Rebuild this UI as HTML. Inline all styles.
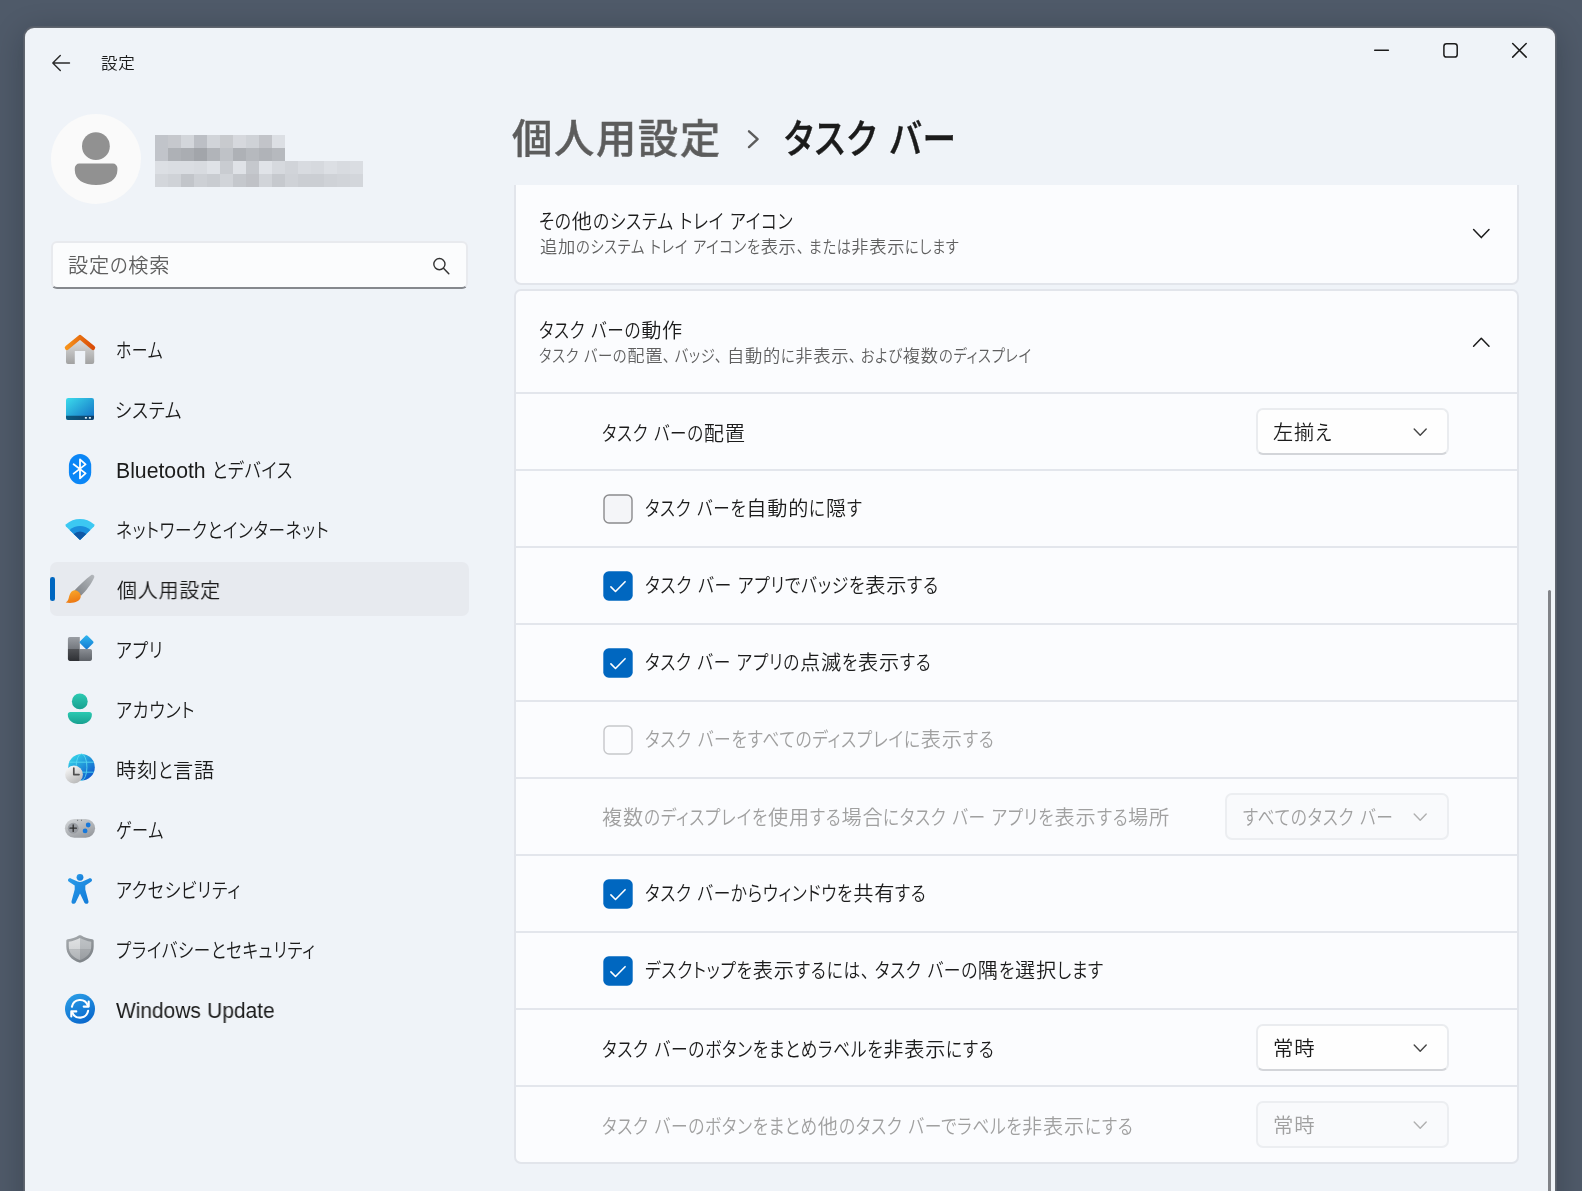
<!DOCTYPE html>
<html lang="ja">
<head>
<meta charset="utf-8">
<title>設定</title>
<style>
*{box-sizing:border-box;margin:0;padding:0}
html,body{width:1582px;height:1191px;overflow:hidden}
body{position:relative;background:#4f5a69;font-family:"Liberation Sans","Noto Sans CJK JP DemiLight","Noto Sans CJK JP",sans-serif;font-feature-settings:"palt";}
#h1a,#h1b{font-family:"Liberation Sans","Noto Sans CJK JP",sans-serif;-webkit-text-stroke:0.4px currentColor}
.win{position:absolute;left:25px;top:28px;width:1530px;height:1300px;background:#eff3f8;border-radius:9px;box-shadow:0 0 0 1px #60666f,0 0 0 2px #565d69,0 6px 30px rgba(10,14,22,.28);}
.t{position:absolute;white-space:pre;display:block;transform-origin:0 50%;will-change:transform}
.r{display:inline-block;transform-origin:0 50%;white-space:pre;word-spacing:.03em}
.c{margin-right:.28em}
.l{font-size:109.1%;letter-spacing:0}
.abs{position:absolute}
.card{position:absolute;left:514px;width:1005px;background:#fbfcfe;border:2px solid #e2e5eb;}
.sep{position:absolute;left:516px;width:1001px;height:2px;background:#e3e6ec}
.combo{position:absolute;height:47px;border-radius:7px;background:#fefefe;border:2px solid #eaecef;border-bottom-color:#d3d5d9;}
.combo.dis{background:#f9fafc;border-color:#eceef1}
svg{position:absolute;overflow:visible}
</style>
</head>
<body>
<div class="win"></div>

<!-- title bar -->
<svg style="left:0;top:0" width="1" height="1"><path d="M60.300 55.600 L52.800 63 L60.300 70.400 M53.200 63 H69.500" fill="none" stroke="#2a2a2a" stroke-width="1.4" stroke-linecap="round" stroke-linejoin="round"/></svg>
<svg style="left:0;top:0" width="1" height="1"><g fill="none" stroke="#1b1b1b" stroke-width="1.5" stroke-linecap="round"><path d="M1374.700 50.300 H1388.400"/><rect x="1443.900" y="43.800" width="13.300" height="13.200" rx="2.600"/><path d="M1512.700 43.500 l13.500 13.600 M1526.200 43.500 l-13.500 13.600"/></g></svg>
<!--SB0--><!-- avatar -->
<div class="abs" style="left:51px;top:114px;width:90px;height:90px;border-radius:50%;background:#fafafa"></div>
<svg style="left:0;top:0" width="1" height="1">
<circle cx="95.9" cy="146.2" r="13.9" fill="#919191"/>
<path d="M79.3 163.6h33.6a4.5 4.5 0 0 1 4.5 4.5v2.2c0 9.3-9 14.8-21.3 14.8s-21.3-5.5-21.3-14.8v-2.2a4.5 4.5 0 0 1 4.5-4.5z" fill="#919191"/>
</svg>
<svg style="left:0;top:0" width="1" height="1" shape-rendering="crispEdges"><rect x="155" y="135" width="13" height="13" fill="#c1c4ca"/><rect x="168" y="135" width="13" height="13" fill="#c6c8cd"/><rect x="181" y="135" width="13" height="13" fill="#d3d6db"/><rect x="194" y="135" width="13" height="13" fill="#bcbfc5"/><rect x="207" y="135" width="13" height="13" fill="#d1d4d9"/><rect x="220" y="135" width="13" height="13" fill="#c8cace"/><rect x="233" y="135" width="13" height="13" fill="#d6d8dd"/><rect x="246" y="135" width="13" height="13" fill="#cfd2d7"/><rect x="259" y="135" width="13" height="13" fill="#c2c4c9"/><rect x="272" y="135" width="13" height="13" fill="#dcdfe4"/><rect x="155" y="148" width="13" height="13" fill="#c1c4ca"/><rect x="168" y="148" width="13" height="13" fill="#aeb1b6"/><rect x="181" y="148" width="13" height="13" fill="#aaadb2"/><rect x="194" y="148" width="13" height="13" fill="#a2a5aa"/><rect x="207" y="148" width="13" height="13" fill="#b1b4b9"/><rect x="220" y="148" width="13" height="13" fill="#bfc2c7"/><rect x="233" y="148" width="13" height="13" fill="#aeb1b6"/><rect x="246" y="148" width="13" height="13" fill="#b6b9be"/><rect x="259" y="148" width="13" height="13" fill="#b0b3b8"/><rect x="272" y="148" width="13" height="13" fill="#b6b9be"/><rect x="155" y="161" width="13" height="13" fill="#dcdfe4"/><rect x="168" y="161" width="13" height="13" fill="#dadde2"/><rect x="181" y="161" width="13" height="13" fill="#dadde2"/><rect x="194" y="161" width="13" height="13" fill="#d8dbe0"/><rect x="207" y="161" width="13" height="13" fill="#dfe2e7"/><rect x="220" y="161" width="13" height="13" fill="#c9ccd1"/><rect x="233" y="161" width="13" height="13" fill="#dfe2e7"/><rect x="246" y="161" width="13" height="13" fill="#c5c8cd"/><rect x="259" y="161" width="13" height="13" fill="#e0e3e8"/><rect x="272" y="161" width="13" height="13" fill="#d6d9de"/><rect x="285" y="161" width="13" height="13" fill="#d1d4d9"/><rect x="298" y="161" width="13" height="13" fill="#d8dbe0"/><rect x="311" y="161" width="13" height="13" fill="#d6d9de"/><rect x="324" y="161" width="13" height="13" fill="#dcdfe4"/><rect x="337" y="161" width="13" height="13" fill="#d8dbe0"/><rect x="350" y="161" width="13" height="13" fill="#dadde2"/><rect x="155" y="174" width="13" height="13" fill="#d3d6db"/><rect x="168" y="174" width="13" height="13" fill="#cfd2d7"/><rect x="181" y="174" width="13" height="13" fill="#c2c5ca"/><rect x="194" y="174" width="13" height="13" fill="#cdd0d5"/><rect x="207" y="174" width="13" height="13" fill="#c9ccd1"/><rect x="220" y="174" width="13" height="13" fill="#d1d4d9"/><rect x="233" y="174" width="13" height="13" fill="#c5c8cd"/><rect x="246" y="174" width="13" height="13" fill="#c0c2c7"/><rect x="259" y="174" width="13" height="13" fill="#d1d4d9"/><rect x="272" y="174" width="13" height="13" fill="#c6c9ce"/><rect x="285" y="174" width="13" height="13" fill="#cfd2d7"/><rect x="298" y="174" width="13" height="13" fill="#cbced3"/><rect x="311" y="174" width="13" height="13" fill="#cbced3"/><rect x="324" y="174" width="13" height="13" fill="#cfd2d7"/><rect x="337" y="174" width="13" height="13" fill="#d1d4d9"/><rect x="350" y="174" width="13" height="13" fill="#d3d6db"/></svg>
<!-- search -->
<div class="abs" style="left:51px;top:240.5px;width:417px;height:48px;border-radius:6px;background:#fbfcfd;border:2px solid #e8eaee;border-bottom:2px solid #85888d;"></div>
<svg style="left:0;top:0" width="1" height="1"><circle cx="439.400" cy="264.100" r="5.600" fill="none" stroke="#333" stroke-width="1.400"/><path d="M443.500 268.200 l5.300 5.500" stroke="#333" stroke-width="1.500" stroke-linecap="round"/></svg>
<!-- selected nav -->
<div class="abs" style="left:50px;top:562px;width:419px;height:54px;border-radius:7px;background:#e7eaef"></div>
<div class="abs" style="left:50px;top:576.8px;width:4.6px;height:24.4px;border-radius:2.3px;background:#0067c0"></div>
<!-- icons -->
<svg style="left:0;top:0" width="1" height="1">
<defs>
<linearGradient id="gHomeB" x1="0" y1="0" x2="0" y2="1"><stop offset="0" stop-color="#e2e2e2"/><stop offset="1" stop-color="#a2a2a2"/></linearGradient>
<linearGradient id="gHomeR" x1="0" y1="0" x2="1" y2="0"><stop offset="0" stop-color="#f6921a"/><stop offset="1" stop-color="#d94c08"/></linearGradient>
<linearGradient id="gSys" x1="0" y1="0" x2="1" y2="1"><stop offset="0" stop-color="#3cdcec"/><stop offset="1" stop-color="#116cc4"/></linearGradient>
<linearGradient id="gSysB" x1="0" y1="0" x2="1" y2="0"><stop offset="0" stop-color="#0c5c82"/><stop offset="1" stop-color="#103e68"/></linearGradient>
<linearGradient id="gBrH" x1="1" y1="0" x2="0" y2="1"><stop offset="0" stop-color="#b6babe"/><stop offset="1" stop-color="#7c8085"/></linearGradient>
<linearGradient id="gBrB" x1="0.3" y1="0" x2="0.6" y2="1"><stop offset="0" stop-color="#f9a82c"/><stop offset="1" stop-color="#ec7612"/></linearGradient>
<linearGradient id="gApA" x1="0" y1="0" x2="0" y2="1"><stop offset="0" stop-color="#9a9ea4"/><stop offset="1" stop-color="#74787e"/></linearGradient>
<linearGradient id="gApB" x1="0" y1="0" x2="0" y2="1"><stop offset="0" stop-color="#505256"/><stop offset="1" stop-color="#2e3034"/></linearGradient>
<linearGradient id="gApC" x1="0" y1="0" x2="0" y2="1"><stop offset="0" stop-color="#8a8e94"/><stop offset="1" stop-color="#5e6268"/></linearGradient>
<linearGradient id="gApD" x1="0" y1="0" x2="1" y2="1"><stop offset="0" stop-color="#30b8f0"/><stop offset="1" stop-color="#1478d0"/></linearGradient>
<linearGradient id="gAcc" x1="0" y1="0" x2="0" y2="1"><stop offset="0" stop-color="#2ccab2"/><stop offset="1" stop-color="#18a090"/></linearGradient>
<linearGradient id="gGlobe" x1="0.15" y1="0.1" x2="0.85" y2="0.9"><stop offset="0" stop-color="#34d0e8"/><stop offset="1" stop-color="#0e58cc"/></linearGradient>
<linearGradient id="gClock" x1="0.2" y1="0" x2="0.8" y2="1"><stop offset="0" stop-color="#fafafa"/><stop offset="1" stop-color="#b4b4b4"/></linearGradient>
<linearGradient id="gGame" x1="0.2" y1="0" x2="0.8" y2="1"><stop offset="0" stop-color="#d0d3d6"/><stop offset="1" stop-color="#94979c"/></linearGradient>
<linearGradient id="gA11y" x1="0" y1="0" x2="1" y2="1"><stop offset="0" stop-color="#2c9ce8"/><stop offset="1" stop-color="#0f78d8"/></linearGradient>
<linearGradient id="gSh" x1="0" y1="0" x2="0.6" y2="1"><stop offset="0" stop-color="#a8acb0"/><stop offset="1" stop-color="#7e8388"/></linearGradient>
<linearGradient id="gShO" x1="0" y1="0" x2="0" y2="1"><stop offset="0" stop-color="#fff" stop-opacity=".12"/><stop offset="1" stop-color="#50555a" stop-opacity=".22"/></linearGradient>
<linearGradient id="gUpd" x1="0.2" y1="0" x2="0.7" y2="1"><stop offset="0" stop-color="#2c9ee6"/><stop offset="1" stop-color="#0866cc"/></linearGradient>
</defs>
<!-- home -->
<path d="M80 338.2 L94.2 350.5 V362 a2 2 0 0 1 -2 2 H85.2 V351 H74.8 V364 H68 a2 2 0 0 1 -2 -2 V350.5 Z" fill="url(#gHomeB)"/>
<path d="M67 347.800 L80 337.100 L93 347.800" fill="none" stroke="url(#gHomeR)" stroke-width="4.4" stroke-linecap="round" stroke-linejoin="round"/>
<!-- system -->
<rect x="66" y="398" width="28" height="22" rx="2.2" fill="url(#gSys)"/>
<path d="M66 415.7h28v2.1a2.2 2.2 0 0 1-2.2 2.2H68.2a2.2 2.2 0 0 1-2.2-2.2z" fill="url(#gSysB)"/>
<rect x="84.9" y="417" width="2" height="1.7" fill="#d6eaf4"/><rect x="88.9" y="417" width="2" height="1.7" fill="#d6eaf4"/>
<!-- bluetooth -->
<rect x="68.9" y="453.9" width="22.3" height="30.3" rx="11.15" ry="12" fill="#0b86f6"/>
<path d="M73.6 464.2 L85.6 473.4 L80 478.4 V459.4 L85.6 464.4 L73.6 473.6" fill="none" stroke="#fff" stroke-width="1.8" stroke-linecap="round" stroke-linejoin="round"/>
<!-- network -->
<path d="M80 540.1 L66 526.6 a1.6 1.6 0 0 1 .1 -2.3 A21 21 0 0 1 93.9 524.3 a1.6 1.6 0 0 1 .1 2.3 Z" fill="#3cc8f2"/>
<path d="M80 540.1 L69.6 530 A15.2 15.2 0 0 1 90.4 530 Z" fill="#1a8edc"/>
<path d="M80 540.1 L73.7 534 A9 9 0 0 1 86.3 534 Z" fill="#0f58a6"/>
<!-- brush -->
<path d="M91.300 575 C92.600 574 94.800 575.200 94.300 577.200 C91.500 583.800 86.200 590.600 81 595.800 L74.400 590.600 C79.400 585 85.400 579.500 91.300 575 Z" fill="url(#gBrH)"/>
<path d="M74.800 590.300 C78.600 590.800 81.200 593.600 80.700 597 C80 601.600 74 603.700 65.700 602.600 C68.400 601.200 68.500 598.600 69.200 596 C70.200 592.500 72.400 590.100 74.800 590.300 Z" fill="url(#gBrB)"/>
<!-- apps -->
<path d="M69.7 637 H79.8 V649 H67.9 V638.8 a1.8 1.8 0 0 1 1.8 -1.8z" fill="url(#gApA)"/>
<path d="M67.9 649 H79.8 V660.9 H69.7 a1.8 1.8 0 0 1 -1.8 -1.8z" fill="url(#gApB)"/>
<path d="M79.8 649 H90.2 a1.8 1.8 0 0 1 1.8 1.8 V659.1 a1.8 1.8 0 0 1 -1.8 1.8 H79.8z" fill="url(#gApC)"/>
<rect x="81.3" y="636.9" width="10.6" height="10.6" rx="1.4" transform="rotate(45 86.6 642.2)" fill="url(#gApD)"/>
<!-- accounts -->
<circle cx="79.8" cy="701.4" r="7.9" fill="url(#gAcc)"/>
<path d="M70.4 711.9h18.9a2.6 2.6 0 0 1 2.6 2.6c0 6-5.2 9.6-12 9.6s-12.1-3.6-12.1-9.6a2.6 2.6 0 0 1 2.6-2.6z" fill="url(#gAcc)"/>
<!-- time -->
<circle cx="81.5" cy="767.2" r="13.3" fill="url(#gGlobe)"/>
<g fill="none" stroke="#5ce0f2" stroke-width="1" opacity=".8"><ellipse cx="81.5" cy="767.2" rx="5.4" ry="13.3"/><path d="M69.2 762.2h24.6M69.2 772.2h24.6"/></g>
<circle cx="74" cy="774.5" r="8.9" fill="url(#gClock)"/>
<path d="M73.8 768v6.6h5.2" fill="none" stroke="#505050" stroke-width="1.7" stroke-linecap="round" stroke-linejoin="round"/>
<!-- game -->
<rect x="64.9" y="818.9" width="30.2" height="18.8" rx="9.4" fill="url(#gGame)"/>
<circle cx="73.2" cy="828.2" r="5.4" fill="#8e9298" opacity=".75"/>
<path d="M70 828.2h6.4M73.2 825v6.4" stroke="#2e2e2e" stroke-width="1.3" stroke-linecap="round"/>
<circle cx="88.2" cy="825" r="2.4" fill="#1878da"/><circle cx="85.1" cy="830.9" r="2.4" fill="#1878da"/>
<path d="M77.2 820.3h.9M81 820.3h.9" stroke="#55585c" stroke-width=".9"/>
<!-- accessibility -->
<circle cx="80" cy="877.3" r="3.4" fill="url(#gA11y)"/>
<path d="M68.900 878.600 c.9 -.5 1.600 -.3 2.500 .1 L77.600 881.500 c1.500 .6 3.300 .6 4.800 0 L88.600 878.700 c.9 -.4 1.700 -.6 2.500 -.1 c1.300 .8 1.200 2.500 0 3.100 L85.300 885.600 V889.600 L88.400 900.900 c.4 1.300 -.2 2.400 -1.300 2.800 c-1.200 .4 -2.500 -.2 -2.900 -1.400 L80 893.400 L75.800 902.300 c-.4 1.200 -1.700 1.800 -2.900 1.400 c-1.100 -.4 -1.700 -1.500 -1.300 -2.800 L74.700 889.600 V885.600 L68.900 881.700 c-1.200 -.6 -1.300 -2.300 0 -3.100 Z" fill="url(#gA11y)"/>
<!-- privacy -->
<path d="M80 935.2 c.5 0 .9 .1 1.300 .4 C84.700 937.700 88.500 938.900 92.300 939.300 c.8 .1 1.400 .7 1.400 1.500 V946.500 c0 8 -5 13.300 -13 16.100 c-.5 .2 -.9 .2 -1.400 0 c-8 -2.800 -13 -8.100 -13 -16.100 V940.800 c0 -.8 .6 -1.400 1.400 -1.500 C71.500 938.900 75.300 937.700 78.700 935.600 c.4 -.3 .8 -.4 1.300 -.4 Z" fill="url(#gSh)"/>
<clipPath id="cSh"><path d="M80 938 C83.300 939.900 87.200 941.200 91.200 941.700 V946.500 c0 6.500 -4.200 11 -11.200 13.500 c-7 -2.500 -11.200 -7 -11.200 -13.500 V941.700 C72.800 941.200 76.700 939.900 80 938 Z"/></clipPath>
<g clip-path="url(#cSh)"><rect x="66" y="936" width="14" height="13.500" fill="#dcdee0"/><rect x="80" y="936" width="14" height="13.500" fill="#b6babe"/><rect x="66" y="949.500" width="14" height="13" fill="#c2c5c8"/><rect x="80" y="949.500" width="14" height="13" fill="#a6aaae"/><rect x="66" y="936" width="28" height="27" fill="url(#gShO)"/></g>
<!-- update -->
<circle cx="80" cy="1008.8" r="15" fill="url(#gUpd)"/>
<g fill="none" stroke="#fff" stroke-width="2.1" stroke-linecap="round" stroke-linejoin="round">
<path d="M71.900 1006.700 A8.300 8.300 0 0 1 87.800 1005.300"/><path d="M83.700 1006.600 H88.700 V1001.600"/>
<path d="M88.100 1010.900 A8.300 8.300 0 0 1 72.200 1012.300"/><path d="M76.300 1011.400 H71.300 V1016.400"/>
</g>
</svg>
<!--SB1-->
<div class="card" style="top:170px;height:115px;border-radius:0 0 7px 7px;clip-path:inset(15px 0 0 0)"></div>
<div class="card" style="top:289px;height:875px;border-radius:7px"></div>
<div class="sep" style="top:392px"></div>
<div class="sep" style="top:469px"></div>
<div class="sep" style="top:546px"></div>
<div class="sep" style="top:623px"></div>
<div class="sep" style="top:700px"></div>
<div class="sep" style="top:777px"></div>
<div class="sep" style="top:854px"></div>
<div class="sep" style="top:931px"></div>
<div class="sep" style="top:1008px"></div>
<div class="sep" style="top:1085px"></div>
<svg style="left:0;top:0" width="1" height="1"><path d="M1473.60 229.60 L1481.30 237.60 L1489.00 229.60" fill="none" stroke="#1b1b1b" stroke-width="1.50" stroke-linecap="round" stroke-linejoin="round"/></svg>
<svg style="left:0;top:0" width="1" height="1"><path d="M1473.60 346.20 L1481.30 338.20 L1489.00 346.20" fill="none" stroke="#1b1b1b" stroke-width="1.50" stroke-linecap="round" stroke-linejoin="round"/></svg>
<svg style="left:0;top:0" width="1" height="1"><rect x="604.00" y="495.00" width="28.00" height="28.00" rx="5" fill="#f4f5f8" stroke="#8b8b8d" stroke-width="1.4"/></svg>
<svg style="left:0;top:0" width="1" height="1"><rect x="603.30" y="571.30" width="29.40" height="29.40" rx="5.5" fill="#0067c0"/><path d="M610.90 586.90 l4.6 4.6 l9.6 -9.8" fill="none" stroke="#fff" stroke-width="1.6" stroke-linecap="round" stroke-linejoin="round"/></svg>
<svg style="left:0;top:0" width="1" height="1"><rect x="603.30" y="648.30" width="29.40" height="29.40" rx="5.5" fill="#0067c0"/><path d="M610.90 663.90 l4.6 4.6 l9.6 -9.8" fill="none" stroke="#fff" stroke-width="1.6" stroke-linecap="round" stroke-linejoin="round"/></svg>
<svg style="left:0;top:0" width="1" height="1"><rect x="604.00" y="726.00" width="28.00" height="28.00" rx="5" fill="#fbfcfe" stroke="#c6c7ca" stroke-width="1.4"/></svg>
<svg style="left:0;top:0" width="1" height="1"><rect x="603.30" y="879.30" width="29.40" height="29.40" rx="5.5" fill="#0067c0"/><path d="M610.90 894.90 l4.6 4.6 l9.6 -9.8" fill="none" stroke="#fff" stroke-width="1.6" stroke-linecap="round" stroke-linejoin="round"/></svg>
<svg style="left:0;top:0" width="1" height="1"><rect x="603.30" y="956.30" width="29.40" height="29.40" rx="5.5" fill="#0067c0"/><path d="M610.90 971.90 l4.6 4.6 l9.6 -9.8" fill="none" stroke="#fff" stroke-width="1.6" stroke-linecap="round" stroke-linejoin="round"/></svg>
<div class="combo" style="left:1256.0px;top:408px;width:193px"></div><svg style="left:0;top:0" width="1" height="1"><path d="M1414.20 428.90 L1420.20 435.30 L1426.20 428.90" fill="none" stroke="#454545" stroke-width="1.40" stroke-linecap="round" stroke-linejoin="round"/></svg>
<div class="combo dis" style="left:1225.0px;top:793px;width:224px"></div><svg style="left:0;top:0" width="1" height="1"><path d="M1414.20 813.90 L1420.20 820.30 L1426.20 813.90" fill="none" stroke="#b0b0b0" stroke-width="1.40" stroke-linecap="round" stroke-linejoin="round"/></svg>
<div class="combo" style="left:1256.0px;top:1024px;width:193px"></div><svg style="left:0;top:0" width="1" height="1"><path d="M1414.20 1044.90 L1420.20 1051.30 L1426.20 1044.90" fill="none" stroke="#454545" stroke-width="1.40" stroke-linecap="round" stroke-linejoin="round"/></svg>
<div class="combo dis" style="left:1256.0px;top:1101px;width:193px"></div><svg style="left:0;top:0" width="1" height="1"><path d="M1414.20 1121.90 L1420.20 1128.30 L1426.20 1121.90" fill="none" stroke="#b0b0b0" stroke-width="1.40" stroke-linecap="round" stroke-linejoin="round"/></svg>
<div class="abs" style="left:1547.5px;top:590px;width:3px;height:700px;border-radius:2px;background:#818388"></div>
<svg style="left:0;top:0" width="1" height="1"><path d="M749 131.300 L757.600 139.200 L749 147.100" fill="none" stroke="#5c5c5c" stroke-width="2.4" stroke-linecap="round" stroke-linejoin="round"/></svg>
<span class="t" id="ttl" style="left:101.20px;top:50.00px;font-size:16.32px;letter-spacing:0.68px;line-height:26px;color:#1b1b1b;font-weight:400;transform:scaleX(1.0156)"><span class="r">設定</span></span>
<span class="t" id="srch" style="left:67.60px;top:250.10px;font-size:20.16px;letter-spacing:0.84px;line-height:32px;color:#5f5f5f;font-weight:400;transform:scaleX(1.0000)"><span class="r">設定</span><span class="r" style="transform:scaleX(0.9012);margin-right:-2.00px">の</span><span class="r">検索</span></span>
<span class="t" id="nav0" style="left:115.60px;top:334.70px;font-size:20.16px;letter-spacing:0.84px;line-height:32px;color:#1b1b1b;font-weight:400;transform:scaleX(1.0000)"><span class="r" style="transform:scaleX(0.7837);margin-right:-13.02px">ホーム</span></span>
<span class="t" id="nav1" style="left:114.60px;top:394.90px;font-size:20.16px;letter-spacing:0.84px;line-height:32px;color:#1b1b1b;font-weight:400;transform:scaleX(1.0000)"><span class="r" style="transform:scaleX(0.8757);margin-right:-9.53px">システム</span></span>
<span class="t" id="nav2" style="left:115.60px;top:455.30px;font-size:20.16px;letter-spacing:0.84px;line-height:32px;color:#1b1b1b;font-weight:400;transform:scaleX(1.0000)"><span class="r l" style="transform:scaleX(0.965);margin-right:-3.49px">Bluetooth </span><span class="r" style="transform:scaleX(0.8501);margin-right:-14.26px">とデバイス</span></span>
<span class="t" id="nav3" style="left:115.60px;top:514.70px;font-size:20.16px;letter-spacing:0.84px;line-height:32px;color:#1b1b1b;font-weight:400;transform:scaleX(1.0000)"><span class="r" style="transform:scaleX(0.8206);margin-right:-46.64px">ネットワークとインターネット</span></span>
<span class="t" id="nav4" style="left:116.60px;top:574.70px;font-size:20.16px;letter-spacing:0.84px;line-height:32px;color:#1b1b1b;font-weight:400;transform:scaleX(0.9904)"><span class="r">個人用設定</span></span>
<span class="t" id="nav5" style="left:115.60px;top:634.70px;font-size:20.16px;letter-spacing:0.84px;line-height:32px;color:#1b1b1b;font-weight:400;transform:scaleX(1.0000)"><span class="r" style="transform:scaleX(0.8395);margin-right:-9.04px">アプリ</span></span>
<span class="t" id="nav6" style="left:115.60px;top:694.70px;font-size:20.16px;letter-spacing:0.84px;line-height:32px;color:#1b1b1b;font-weight:400;transform:scaleX(1.0000)"><span class="r" style="transform:scaleX(0.8491);margin-right:-14.07px">アカウント</span></span>
<span class="t" id="nav7" style="left:115.60px;top:754.70px;font-size:20.16px;letter-spacing:0.84px;line-height:32px;color:#1b1b1b;font-weight:400;transform:scaleX(1.0000)"><span class="r">時刻</span><span class="r" style="transform:scaleX(0.8110);margin-right:-3.52px">と</span><span class="r">言語</span></span>
<span class="t" id="nav8" style="left:115.60px;top:814.70px;font-size:20.16px;letter-spacing:0.84px;line-height:32px;color:#1b1b1b;font-weight:400;transform:scaleX(1.0000)"><span class="r" style="transform:scaleX(0.7970);margin-right:-12.22px">ゲーム</span></span>
<span class="t" id="nav9" style="left:115.60px;top:875.40px;font-size:20.16px;letter-spacing:0.84px;line-height:32px;color:#1b1b1b;font-weight:400;transform:scaleX(1.0000)"><span class="r" style="transform:scaleX(0.8438);margin-right:-23.12px">アクセシビリティ</span></span>
<span class="t" id="nav10" style="left:115.60px;top:935.40px;font-size:20.16px;letter-spacing:0.84px;line-height:32px;color:#1b1b1b;font-weight:400;transform:scaleX(1.0000)"><span class="r" style="transform:scaleX(0.8187);margin-right:-44.21px">プライバシーとセキュリティ</span></span>
<span class="t" id="nav11" style="left:116.00px;top:994.70px;font-size:20.16px;letter-spacing:0.84px;line-height:32px;color:#1b1b1b;font-weight:400;transform:scaleX(0.9851)"><span class="r l" style="transform:scaleX(0.965);margin-right:-5.84px">Windows Update</span></span>
<span class="t" id="h1a" style="left:512.20px;top:107.70px;font-size:40.32px;letter-spacing:1.68px;line-height:63px;color:#5c5c5c;font-weight:500;transform:scaleX(0.9991)"><span class="r">個人用設定</span></span>
<span class="t" id="h1b" style="left:784.20px;top:107.50px;font-size:40.32px;letter-spacing:1.68px;line-height:63px;color:#1b1b1b;font-weight:500;transform:scaleX(1.0000)"><span class="r" style="transform:scaleX(0.8334);margin-right:-34.65px">タスク バー</span></span>
<span class="t" id="c1t" style="left:538.80px;top:205.70px;font-size:20.16px;letter-spacing:0.84px;line-height:32px;color:#1b1b1b;font-weight:400;transform:scaleX(1.0000)"><span class="r" style="transform:scaleX(0.8324);margin-right:-6.59px">その</span><span class="r">他</span><span class="r" style="transform:scaleX(0.8324);margin-right:-40.33px">のシステム トレイ アイコン</span></span>
<span class="t" id="c1d" style="left:540.10px;top:234.40px;font-size:17.28px;letter-spacing:0.72px;line-height:27px;color:#5f5f5f;font-weight:400;transform:scaleX(1.0000)"><span class="r">追加</span><span class="r" style="transform:scaleX(0.8290);margin-right:-38.08px">のシステム トレイ アイコンを</span><span class="r">表示</span><span class="r" style="transform:scaleX(0.8290);margin-right:-11.29px"><span class="c">、</span>または</span><span class="r">非表示</span><span class="r" style="transform:scaleX(0.8290);margin-right:-11.22px">にします</span></span>
<span class="t" id="c2t" style="left:538.80px;top:315.10px;font-size:20.16px;letter-spacing:0.84px;line-height:32px;color:#1b1b1b;font-weight:400;transform:scaleX(1.0000)"><span class="r" style="transform:scaleX(0.8217);margin-right:-22.15px">タスク バーの</span><span class="r">動作</span></span>
<span class="t" id="c2d" style="left:538.80px;top:342.90px;font-size:17.28px;letter-spacing:0.72px;line-height:27px;color:#5f5f5f;font-weight:400;transform:scaleX(1.0000)"><span class="r" style="transform:scaleX(0.8289);margin-right:-18.21px">タスク バーの</span><span class="r">配置</span><span class="r" style="transform:scaleX(0.8289);margin-right:-13.14px"><span class="c">、</span>バッジ<span class="c">、</span></span><span class="r">自動的</span><span class="r" style="transform:scaleX(0.8289);margin-right:-2.97px">に</span><span class="r">非表示</span><span class="r" style="transform:scaleX(0.8289);margin-right:-11.06px"><span class="c">、</span>および</span><span class="r">複数</span><span class="r" style="transform:scaleX(0.8289);margin-right:-19.13px">のディスプレイ</span></span>
<span class="t" id="r1" style="left:602.20px;top:417.90px;font-size:20.16px;letter-spacing:0.84px;line-height:32px;color:#1b1b1b;font-weight:400;transform:scaleX(1.0000)"><span class="r" style="transform:scaleX(0.8192);margin-right:-22.46px">タスク バーの</span><span class="r">配置</span></span>
<span class="t" id="r2" style="left:645.30px;top:493.20px;font-size:20.16px;letter-spacing:0.84px;line-height:32px;color:#1b1b1b;font-weight:400;transform:scaleX(1.0000)"><span class="r" style="transform:scaleX(0.8207);margin-right:-22.13px">タスク バーを</span><span class="r">自動的</span><span class="r" style="transform:scaleX(0.8207);margin-right:-3.63px">に</span><span class="r">隠</span><span class="r" style="transform:scaleX(0.8207);margin-right:-3.42px">す</span></span>
<span class="t" id="r3" style="left:645.30px;top:570.20px;font-size:20.16px;letter-spacing:0.84px;line-height:32px;color:#1b1b1b;font-weight:400;transform:scaleX(1.0000)"><span class="r" style="transform:scaleX(0.8357);margin-right:-43.29px">タスク バー アプリでバッジを</span><span class="r">表示</span><span class="r" style="transform:scaleX(0.8357);margin-right:-6.24px">する</span></span>
<span class="t" id="r4" style="left:645.30px;top:647.20px;font-size:20.16px;letter-spacing:0.84px;line-height:32px;color:#1b1b1b;font-weight:400;transform:scaleX(1.0000)"><span class="r" style="transform:scaleX(0.8258);margin-right:-32.69px">タスク バー アプリの</span><span class="r">点滅</span><span class="r" style="transform:scaleX(0.8258);margin-right:-3.39px">を</span><span class="r">表示</span><span class="r" style="transform:scaleX(0.8258);margin-right:-6.62px">する</span></span>
<span class="t" id="r5" style="left:645.30px;top:724.20px;font-size:20.16px;letter-spacing:0.84px;line-height:32px;color:#a0a0a0;font-weight:400;transform:scaleX(1.0000)"><span class="r" style="transform:scaleX(0.8307);margin-right:-56.19px">タスク バーをすべてのディスプレイに</span><span class="r">表示</span><span class="r" style="transform:scaleX(0.8307);margin-right:-6.43px">する</span></span>
<span class="t" id="r6" style="left:602.20px;top:801.50px;font-size:20.16px;letter-spacing:0.84px;line-height:32px;color:#a0a0a0;font-weight:400;transform:scaleX(1.0000)"><span class="r">複数</span><span class="r" style="transform:scaleX(0.8268);margin-right:-25.97px">のディスプレイを</span><span class="r">使用</span><span class="r" style="transform:scaleX(0.8268);margin-right:-6.58px">する</span><span class="r">場合</span><span class="r" style="transform:scaleX(0.8268);margin-right:-35.86px">にタスク バー アプリを</span><span class="r">表示</span><span class="r" style="transform:scaleX(0.8268);margin-right:-6.58px">する</span><span class="r">場所</span></span>
<span class="t" id="r7" style="left:645.30px;top:878.20px;font-size:20.16px;letter-spacing:0.84px;line-height:32px;color:#1b1b1b;font-weight:400;transform:scaleX(1.0000)"><span class="r" style="transform:scaleX(0.8258);margin-right:-43.90px">タスク バーからウィンドウを</span><span class="r">共有</span><span class="r" style="transform:scaleX(0.8258);margin-right:-6.62px">する</span></span>
<span class="t" id="r8" style="left:645.30px;top:955.20px;font-size:20.16px;letter-spacing:0.84px;line-height:32px;color:#1b1b1b;font-weight:400;transform:scaleX(1.0000)"><span class="r" style="transform:scaleX(0.8318);margin-right:-21.78px">デスクトップを</span><span class="r">表示</span><span class="r" style="transform:scaleX(0.8318);margin-right:-37.01px">するには<span class="c">、</span>タスク バーの</span><span class="r">隅</span><span class="r" style="transform:scaleX(0.8318);margin-right:-3.27px">を</span><span class="r">選択</span><span class="r" style="transform:scaleX(0.8318);margin-right:-9.48px">します</span></span>
<span class="t" id="r9" style="left:602.20px;top:1034.10px;font-size:20.16px;letter-spacing:0.84px;line-height:32px;color:#1b1b1b;font-weight:400;transform:scaleX(1.0000)"><span class="r" style="transform:scaleX(0.8299);margin-right:-57.64px">タスク バーのボタンをまとめラベルを</span><span class="r">非表示</span><span class="r" style="transform:scaleX(0.8299);margin-right:-9.94px">にする</span></span>
<span class="t" id="r10" style="left:602.20px;top:1111.10px;font-size:20.16px;letter-spacing:0.84px;line-height:32px;color:#a0a0a0;font-weight:400;transform:scaleX(1.0000)"><span class="r" style="transform:scaleX(0.8289);margin-right:-44.50px">タスク バーのボタンをまとめ</span><span class="r">他</span><span class="r" style="transform:scaleX(0.8289);margin-right:-37.85px">のタスク バーでラベルを</span><span class="r">非表示</span><span class="r" style="transform:scaleX(0.8289);margin-right:-10.00px">にする</span></span>
<span class="t" id="cb1" style="left:1273.00px;top:416.50px;font-size:20.16px;letter-spacing:0.84px;line-height:32px;color:#1b1b1b;font-weight:400;transform:scaleX(1.0000)"><span class="r">左揃</span><span class="r" style="transform:scaleX(0.8946);margin-right:-2.01px">え</span></span>
<span class="t" id="cb6" style="left:1243.40px;top:801.50px;font-size:20.16px;letter-spacing:0.84px;line-height:32px;color:#a0a0a0;font-weight:400;transform:scaleX(1.0000)"><span class="r" style="transform:scaleX(0.8280);margin-right:-31.28px">すべてのタスク バー</span></span>
<span class="t" id="cb9" style="left:1273.00px;top:1032.50px;font-size:20.16px;letter-spacing:0.84px;line-height:32px;color:#1b1b1b;font-weight:400;transform:scaleX(1.0110)"><span class="r">常時</span></span>
<span class="t" id="cb10" style="left:1273.00px;top:1109.50px;font-size:20.16px;letter-spacing:0.84px;line-height:32px;color:#a0a0a0;font-weight:400;transform:scaleX(1.0110)"><span class="r">常時</span></span>
</body>
</html>
